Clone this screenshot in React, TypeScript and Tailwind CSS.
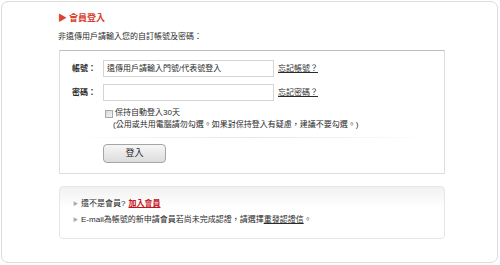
import React from "react";

export default function App() {
  return (
    <div className="w-[500px] h-[265px] bg-white p-[1px] font-['Liberation_Sans','Noto_Sans_CJK_TC',sans-serif] text-[8px] text-[#2a2a2a]">
      <div className="w-[497px] h-[262px] border border-[#dcdcdc] rounded-[7px] pl-[55px] pt-[11px]">
        <div className="flex items-center h-[12px] text-[9px] font-bold text-[#d9412f]">
          <span className="text-[9px] mr-[2px] ml-[1px]">▶</span>
          <span>會員登入</span>
        </div>
        <div className="h-[12px] mt-[6px] leading-[12px] ml-[1px]">非遠傳用戶請輸入您的自訂帳號及密碼：</div>
        <div className="w-[386px] h-[124px] mt-[7px] ml-[2px] border border-[#dedede] border-t-[#bdbdbd] pt-[9px]">
          <div className="flex items-center h-[17px]">
            <div className="w-[36px] text-right font-semibold">帳號：</div>
            <div className="ml-[7px] w-[171px] h-[17px] border border-[#d5d5d5] pl-[3px] leading-[15px]">遠傳用戶請輸入門號/代表號登入</div>
            <a className="ml-[4px] underline">忘記帳號？</a>
          </div>
          <div className="flex items-center h-[17px] mt-[7px]">
            <div className="w-[36px] text-right font-semibold">密碼：</div>
            <div className="ml-[7px] w-[171px] h-[17px] border border-[#d5d5d5]"></div>
            <a className="ml-[4px] underline">忘記密碼？</a>
          </div>
          <div className="flex mt-[6px] ml-[45px] leading-[12px]">
            <div className="w-[8px] h-[8px] mt-[3px] border border-[#a8a8a8] bg-gradient-to-br from-[#d8d8d8] to-[#f4f4f4]"></div>
            <div className="ml-[2px]">
              <div>保持自動登入30天</div>
              <div className="-ml-[2px]">(公用或共用電腦請勿勾選。如果對保持登入有疑慮，建議不要勾選。)</div>
            </div>
          </div>
          <div className="h-[1px] mt-[6px] mx-[10px] bg-gradient-to-r from-transparent via-[#e6e6e6] to-transparent"></div>
          <div className="mt-[6px] ml-[43px] w-[63px] h-[19px] rounded-[4px] border border-[#a5a5a5] bg-gradient-to-b from-[#f6f6f6] to-[#dcdcdc] flex items-center justify-center text-[9px]">
            登入
          </div>
        </div>
        <div className="w-[386px] h-[53px] mt-[12px] ml-[2px] rounded-[4px] border border-[#e6e6e6] bg-gradient-to-b from-[#f1f1f1] to-white to-[40%] pl-[13px] pt-[11px]">
          <div className="flex items-center h-[12px]">
            <span className="text-[5px] text-[#aaa] mr-[3px]">▶</span>
            <span>還不是會員?</span>
            <a className="ml-[3px] font-bold underline text-[#c4141c]">加入會員</a>
          </div>
          <div className="flex items-center h-[12px] mt-[4px]">
            <span className="text-[5px] text-[#aaa] mr-[3px]">▶</span>
            <span>E-mail為帳號的新申請會員若尚未完成認證，請選擇<a className="underline">重發認證信</a>。</span>
          </div>
        </div>
      </div>
    </div>
  );
}
